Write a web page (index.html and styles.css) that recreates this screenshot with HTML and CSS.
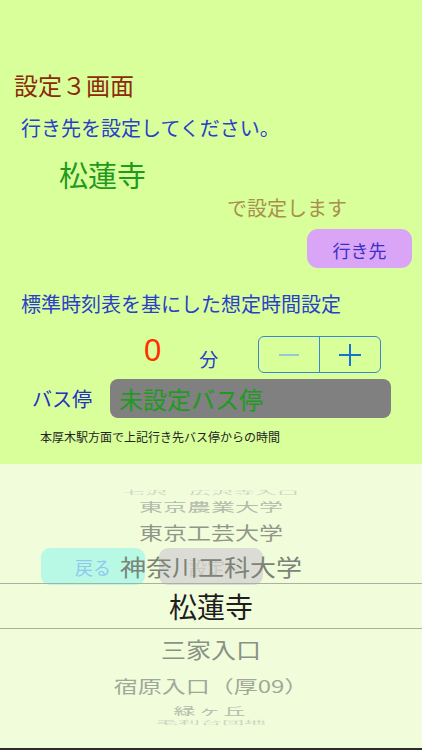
FILE: index.html
```html
<!DOCTYPE html>
<html lang="ja">
<head>
<meta charset="utf-8">
<title>設定３画面</title>
<link rel="stylesheet" href="styles.css">
</head>
<body>
<div class="screen">
  <div class="title">設定３画面</div>
  <div class="prompt">行き先を設定してください。</div>
  <div class="dest">松蓮寺</div>
  <div class="suffix">で設定します</div>
  <div class="btn-row"><button class="dest-btn">行き先</button></div>
  <div class="prompt heading2">標準時刻表を基にした想定時間設定</div>
  <div class="time-row">
    <span class="minutes">0</span>
    <span class="unit">分</span>
    <div class="stepper">
      <div class="step">
        <svg width="24" height="24" viewBox="0 0 24 24"><line x1="2" y1="12" x2="22" y2="12" stroke="#86bddc" stroke-width="1.6"/></svg>
      </div>
      <div class="step">
        <svg width="24" height="24" viewBox="0 0 24 24"><line x1="1" y1="12" x2="23" y2="12" stroke="#1a6fd2" stroke-width="2"/><line x1="12" y1="1" x2="12" y2="23" stroke="#1a6fd2" stroke-width="2"/></svg>
      </div>
    </div>
  </div>
  <div class="bus-row">
    <span class="bus-label">バス停</span>
    <div class="bus-box">未設定バス停</div>
  </div>
  <div class="note">本厚木駅方面で上記行き先バス停からの時間</div>

  <div class="picker">
    <div class="under-btn back">戻る</div>
    <div class="under-btn set">設定</div>
    <div class="wheel">
      <div class="item r-far"><span>七沢　広沢寺入口</span></div>
      <div class="item r-3"><span>東京農業大学</span></div>
      <div class="item r-2"><span>東京工芸大学</span></div>
      <div class="item r-1"><span>神奈川工科大学</span></div>
      <div class="item selected"><span>松蓮寺</span></div>
      <div class="item r-1b"><span>三家入口</span></div>
      <div class="item r-2b"><span>宿原入口（厚09）</span></div>
      <div class="item r-3b"><span>緑ヶ丘</span></div>
      <div class="item r-farb"><span>毛利台団地</span></div>
    </div>
  </div>
</div>
</body>
</html>
```

FILE: styles.css
```css
* { box-sizing: border-box; }
html, body {
  margin: 0;
  padding: 0;
}
body {
  width: 422px;
  height: 750px;
  overflow: hidden;
  background: #d9ff9b;
  font-family: "Noto Sans CJK JP", "Noto Sans", sans-serif;
}
.screen {
  width: 422px;
  height: 750px;
  display: flex;
  flex-direction: column;
}
.title {
  margin-top: 70px;
  padding-left: 14px;
  font-size: 24px;
  line-height: 30px;
  height: 30px;
  color: #8c2a0c;
}
.prompt {
  margin-top: 15px;
  padding-left: 21px;
  font-size: 20px;
  line-height: 26px;
  height: 26px;
  color: #2a40c8;
}
.dest {
  margin-top: 16px;
  padding-left: 59px;
  font-size: 29px;
  line-height: 34px;
  height: 34px;
  color: #1f9a1f;
}
.suffix {
  margin-top: 4px;
  padding-left: 227px;
  font-size: 20px;
  line-height: 26px;
  height: 26px;
  color: #a8904c;
}
.btn-row {
  margin-top: 8px;
  display: flex;
  justify-content: flex-end;
  padding-right: 10px;
}
.dest-btn {
  width: 105px;
  height: 39px;
  border: none;
  border-radius: 11px;
  background: #daa4f7;
  color: #3a30c4;
  font-family: "Noto Sans CJK JP", sans-serif;
  font-size: 18px;
  line-height: 39px;
  padding: 2px 0 0 0;
}
.heading2 {
  margin-top: 23px;
}
.time-row {
  margin-top: 19px;
  height: 37px;
  display: flex;
  align-items: flex-start;
}
.minutes {
  margin-left: 144px;
  font-family: "Liberation Sans", sans-serif;
  font-size: 31px;
  line-height: 30px;
  color: #ff3000;
}
.unit {
  margin-left: 38px;
  margin-top: 13px;
  font-size: 19px;
  line-height: 20px;
  color: #2a40c8;
}
.stepper {
  margin-left: 40px;
  width: 123px;
  height: 37px;
  border: 1.5px solid #3b86cf;
  border-radius: 6px;
  display: flex;
}
.step {
  flex: 1;
  display: flex;
  align-items: center;
  justify-content: center;
}
.step + .step {
  border-left: 1.5px solid #3b86cf;
}
.bus-row {
  margin-top: 6px;
  height: 39px;
  display: flex;
  align-items: center;
}
.bus-label {
  margin-left: 32px;
  font-size: 20px;
  line-height: 26px;
  color: #2430c0;
}
.bus-box {
  margin-left: 18px;
  width: 281px;
  height: 39px;
  border-radius: 8px;
  background: #808080;
  padding-left: 9px;
  font-size: 24px;
  line-height: 39px;
  color: #1f9a1f;
}
.note {
  margin-top: 11px;
  padding-left: 40px;
  font-size: 12px;
  line-height: 16px;
  height: 16px;
  color: #222222;
}
.picker {
  margin-top: auto;
  height: 286px;
  position: relative;
  background: #f1fdda;
  border-bottom: 2px solid #2c2c2c;
}
.under-btn {
  position: absolute;
  top: 84px;
  height: 37px;
  width: 104px;
  border-radius: 9px;
  display: flex;
  align-items: center;
  font-size: 18px;
}
.under-btn.back {
  left: 41px;
  background: #b8f9e6;
  color: #92c6ee;
  padding-left: 34px;
}
.under-btn.set {
  left: 159px;
  background: #dcdcd6;
  color: #c8c8c0;
  padding-left: 30px;
}
.wheel {
  position: relative;
  padding-top: 23px;
  display: flex;
  flex-direction: column;
}
.item {
  display: flex;
  align-items: center;
  justify-content: center;
  overflow: visible;
  white-space: nowrap;
}
.item span {
  display: inline-block;
}
.r-far { height: 10px; font-size: 22px; color: #cdd5c4; }
.r-far span { transform: scaleY(0.22); }
.r-3 { height: 18px; font-size: 24px; color: #b3bbac; }
.r-3 span { transform: scaleY(0.5); }
.r-2 { height: 32px; font-size: 24px; color: #8f978b; }
.r-2 span { transform: scaleY(0.78); }
.r-1 { height: 36px; font-size: 26px; color: #7c8478; }
.r-1 span { transform: scaleY(0.88); }
.selected {
  height: 46px;
  font-size: 28px;
  color: #1e1e1e;
  border-top: 1px solid #a9b1a2;
  border-bottom: 1px solid #a9b1a2;
}
.r-1b { height: 40px; font-size: 25px; color: #8a9286; }
.r-1b span { transform: scaleY(0.85); }
.r-2b { height: 32px; font-size: 24px; color: #a0a89a; }
.r-2b span { transform: scaleY(0.72); }
.r-3b { height: 18px; font-size: 22px; color: #b3bbac; letter-spacing: 3px; }
.r-3b span { transform: scaleY(0.48); }
.r-farb { height: 6px; font-size: 22px; color: #cdd5c4; }
.r-farb span { transform: scaleY(0.2); }
```
